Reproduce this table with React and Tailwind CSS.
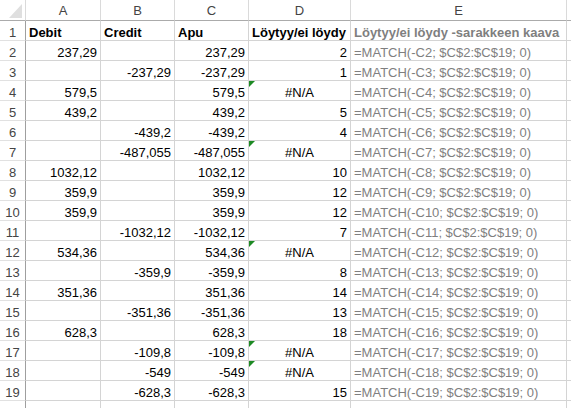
import React from 'react';

const rows = [
  ['237,29', '', '237,29', '2'],
  ['', '-237,29', '-237,29', '1'],
  ['579,5', '', '579,5', '#N/A'],
  ['439,2', '', '439,2', '5'],
  ['', '-439,2', '-439,2', '4'],
  ['', '-487,055', '-487,055', '#N/A'],
  ['1032,12', '', '1032,12', '10'],
  ['359,9', '', '359,9', '12'],
  ['359,9', '', '359,9', '12'],
  ['', '-1032,12', '-1032,12', '7'],
  ['534,36', '', '534,36', '#N/A'],
  ['', '-359,9', '-359,9', '8'],
  ['351,36', '', '351,36', '14'],
  ['', '-351,36', '-351,36', '13'],
  ['628,3', '', '628,3', '18'],
  ['', '-109,8', '-109,8', '#N/A'],
  ['', '-549', '-549', '#N/A'],
  ['', '-628,3', '-628,3', '15'],
];

const cell = 'h-[20px] border-b border-r border-[#d4d4d4] px-[3px] pt-[4px] leading-[15px] whitespace-nowrap overflow-hidden';
const rowHead = 'h-[20px] border-b border-r border-b-[#e1e1e1] border-r-[#9f9f9f] text-center pt-[4px] leading-[15px] text-[#444]';
const colHead = 'h-[21px] border-b border-r border-b-[#ababab] border-r-[#dadada] text-center pt-[3px] leading-[15px] text-[#444]';

// small green error marker in the corner of a cell
const Flag = () => (
  <svg className="absolute top-0 left-0" width="6" height="6" viewBox="0 0 6 6">
    <polygon points="0,0 6,0 0,6" fill="#1d8a24" />
  </svg>
);

export default function App() {
  return (
    <div
      className="h-[408px] w-[571px] overflow-hidden bg-white text-[13px] text-black"
      style={{ fontFamily: '"Liberation Sans", Arial, sans-serif' }}
    >
      <div className="grid grid-cols-[26px_75px_74px_74px_102px_216px_1fr]">
        {/* column headers */}
        <div className={`${colHead} relative`}>
          <svg className="absolute top-0 left-0" width="25" height="20" viewBox="0 0 25 20">
            <polygon points="22,4 22,18 9,18" fill="#dfdfdf" />
          </svg>
        </div>
        <div className={colHead}>A</div>
        <div className={colHead}>B</div>
        <div className={colHead}>C</div>
        <div className={colHead}>D</div>
        <div className={colHead}>E</div>
        <div className={colHead} />

        {/* row 1 */}
        <div className={rowHead}>1</div>
        <div className={`${cell} font-bold`}>Debit</div>
        <div className={`${cell} font-bold`}>Credit</div>
        <div className={`${cell} font-bold`}>Apu</div>
        <div className={`${cell} font-bold`}>Löytyy/ei löydy</div>
        <div className={`${cell} font-bold text-[#7f7f7f]`}>Löytyy/ei löydy -sarakkeen kaava</div>
        <div className={cell} />

        {rows.map((r, i) => {
          const n = i + 2;
          const na = r[3] === '#N/A';
          return (
            <React.Fragment key={n}>
              <div className={rowHead}>{n}</div>
              <div className={`${cell} text-right`}>{r[0]}</div>
              <div className={`${cell} text-right`}>{r[1]}</div>
              <div className={`${cell} text-right`}>{r[2]}</div>
              <div className={`${cell} relative ${na ? 'text-center' : 'text-right'}`}>
                {na && <Flag />}
                {r[3]}
              </div>
              <div className={`${cell} text-[#7f7f7f]`}>=MATCH(-C{n}; $C$2:$C$19; 0)</div>
              <div className={cell} />
            </React.Fragment>
          );
        })}

        {/* partly visible row 20 */}
        <div className={rowHead} />
        <div className={cell} />
        <div className={cell} />
        <div className={cell} />
        <div className={cell} />
        <div className={cell} />
        <div className={cell} />
      </div>
    </div>
  );
}
